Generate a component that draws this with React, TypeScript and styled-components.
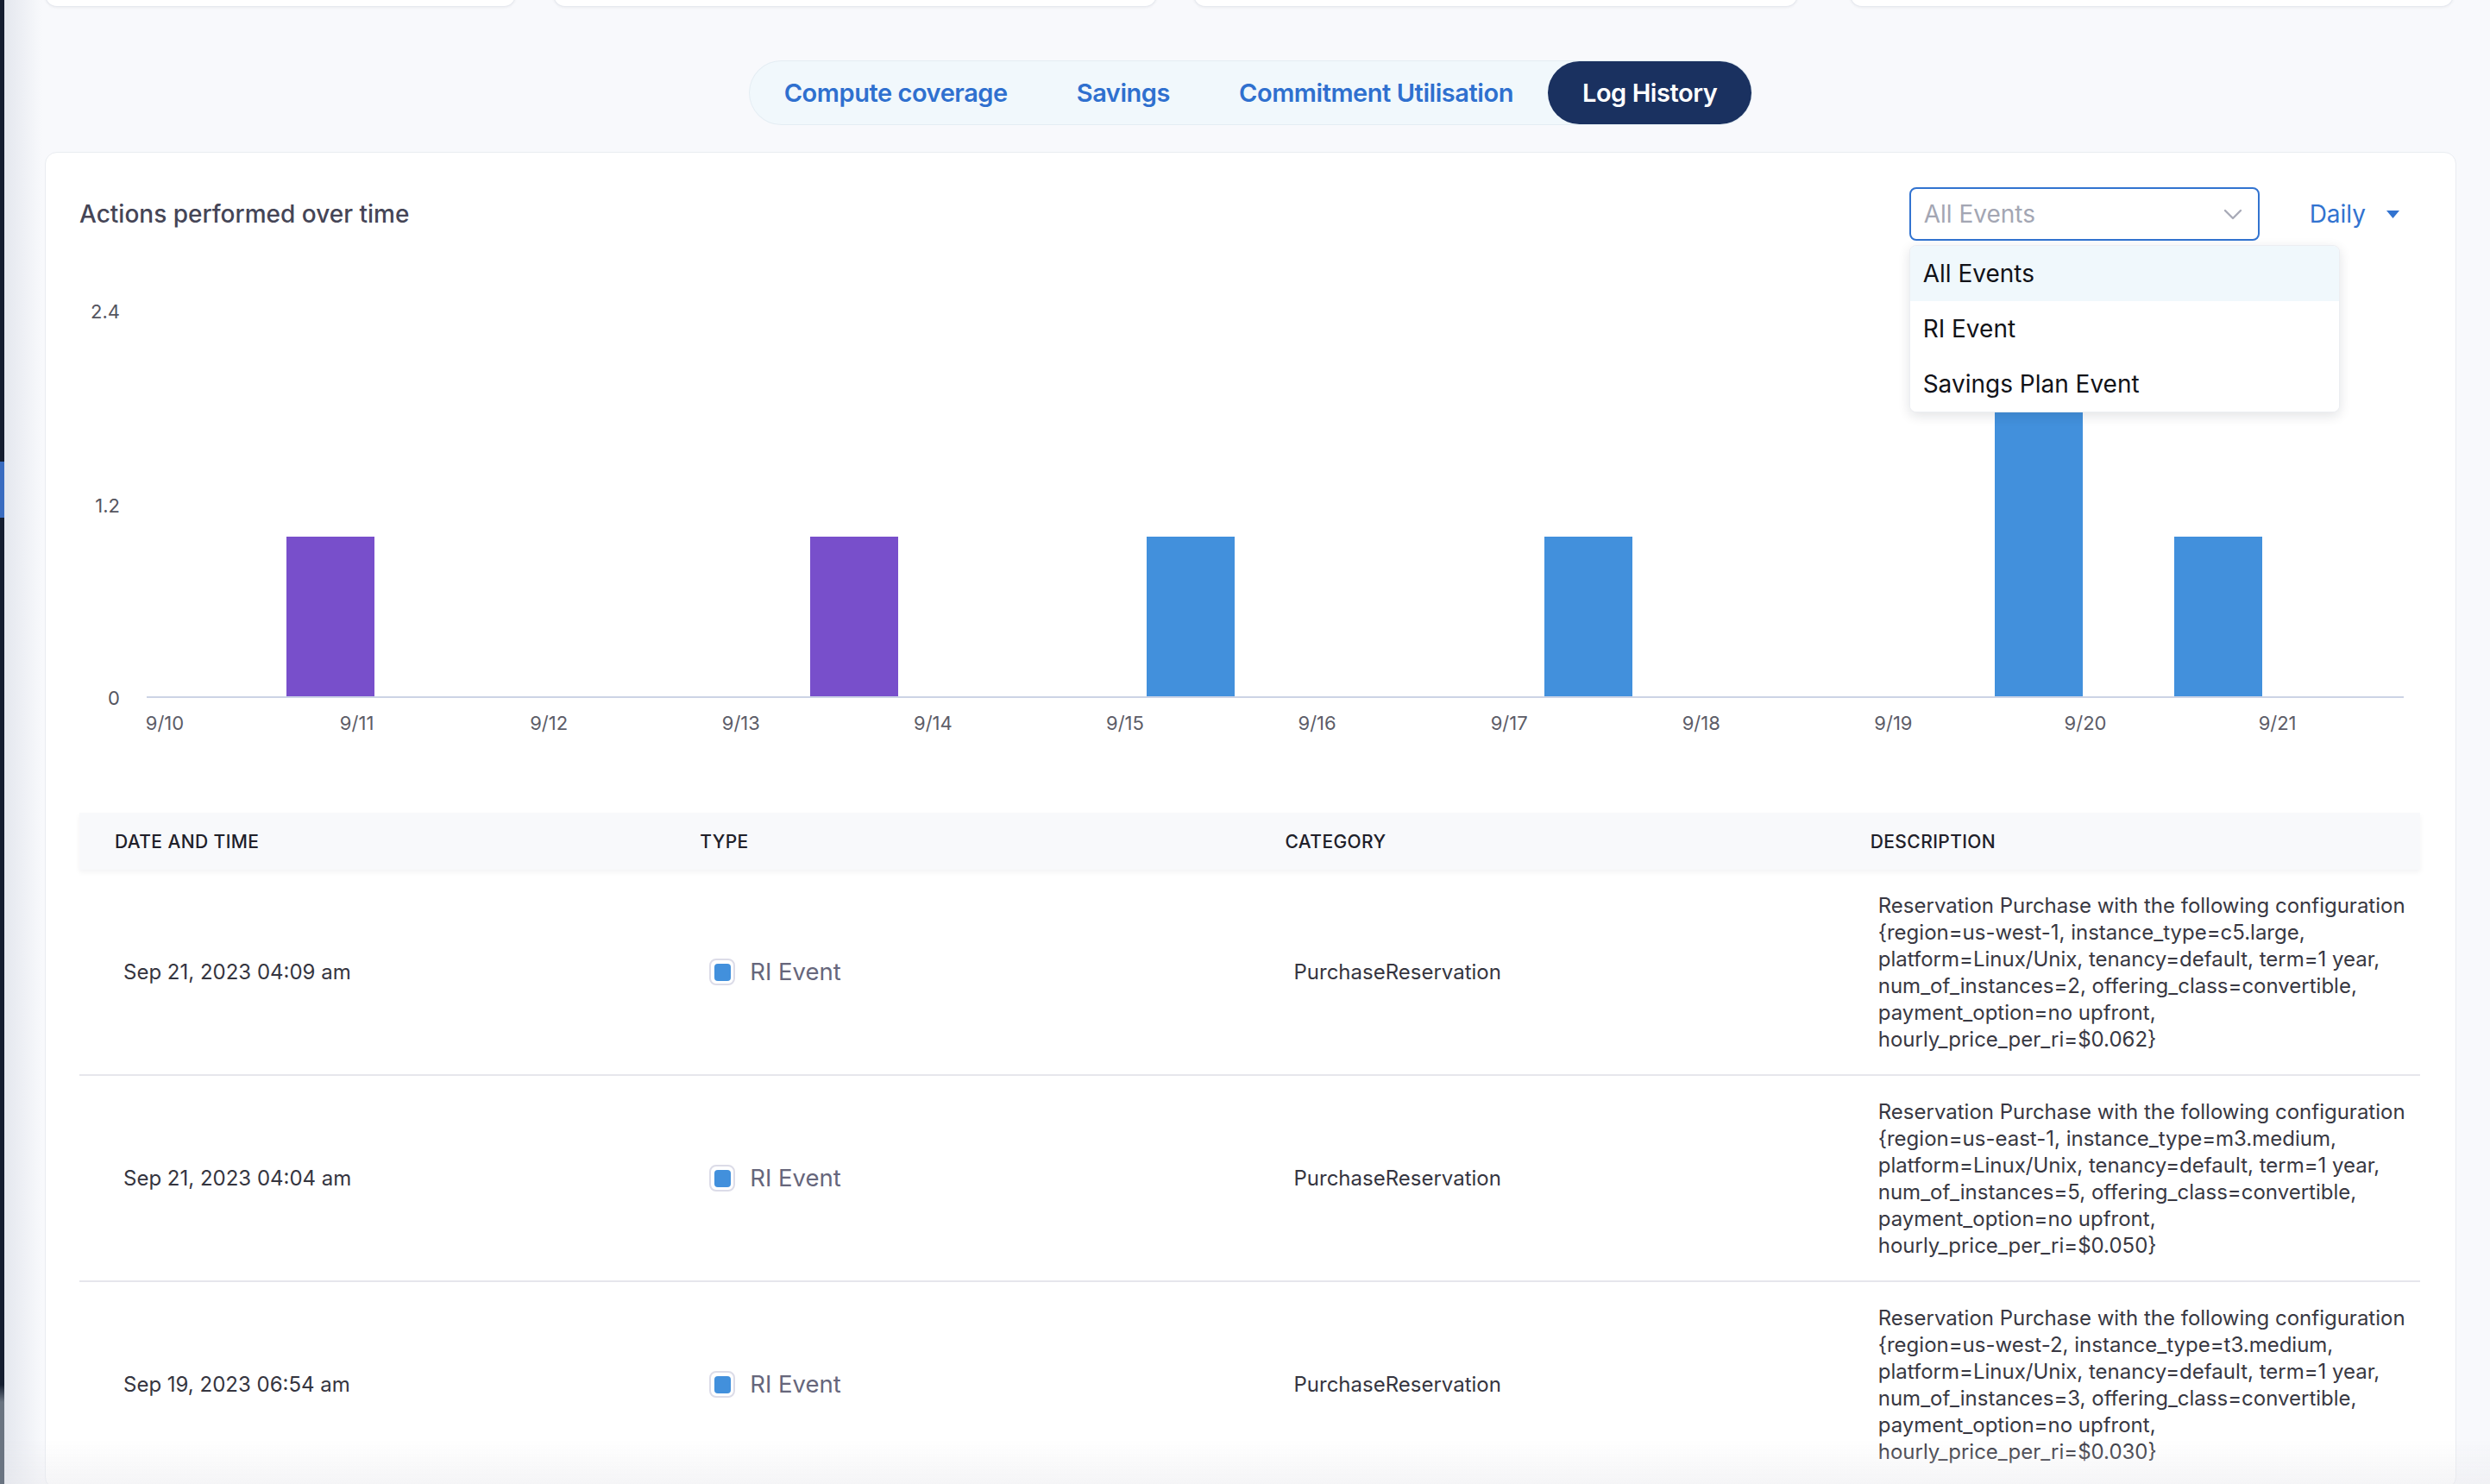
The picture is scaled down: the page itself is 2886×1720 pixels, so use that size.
import React from "react";
import styled, { createGlobalStyle } from "styled-components";

const GlobalStyle = createGlobalStyle`
  html, body { margin: 0; padding: 0; background: #f8f9fc; overflow: hidden; }
  body { font-family: Inter, "Noto Sans", "Liberation Sans", sans-serif; -webkit-font-smoothing: antialiased; }
  * { box-sizing: border-box; }
`;

const FONT = `Inter, "Noto Sans", "Liberation Sans", sans-serif`;

const Shell = styled.div`
  display: flex;
  width: 2886px;
  height: 1720px;
  overflow: hidden;
`;

const Rail = styled.div`
  width: 5px;
  flex: none;
  background: linear-gradient(
    to bottom,
    #151e30 0,
    #151e30 535px,
    #3a6cc0 535px,
    #3a6cc0 600px,
    #151e30 600px,
    #151e30 1605px,
    #6a7481 1625px
  );
`;

const Main = styled.main`
  flex: 1;
  min-width: 0;
  padding: 0 39px 0 47px;
  background: linear-gradient(to right, #e4e7ee 0, #f8f9fc 44px);
  display: flex;
  flex-direction: column;
`;

const TopCards = styled.div`
  display: flex;
  height: 60px;
  margin-top: -52px;
  flex: none;
`;

const TopCard = styled.div<{ $w: number; $ml: number }>`
  width: ${(p) => p.$w}px;
  margin-left: ${(p) => p.$ml}px;
  background: #fff;
  border: 1px solid #e6e9ef;
  border-top: none;
  border-radius: 0 0 14px 14px;
  box-shadow: 0 1px 3px rgba(16, 24, 40, 0.06);
`;

const TabBar = styled.nav`
  align-self: center;
  margin-top: 63px;
  display: flex;
  height: 73px;
  flex: none;
  background: #f1f8fc;
  box-shadow: 0 0 0 1px #e4edf3;
  border-radius: 37px;
`;

const Tab = styled.button<{ $active?: boolean }>`
  height: 100%;
  padding: 0 40px;
  border: none;
  border-radius: 37px;
  font-family: ${FONT};
  font-weight: 600;
  font-size: 29px;
  letter-spacing: -0.45px;
  color: ${(p) => (p.$active ? "#ffffff" : "#2f70cf")};
  background: ${(p) => (p.$active ? "#1a3160" : "transparent")};
  cursor: pointer;
`;

const Panel = styled.section`
  margin-top: 32px;
  flex: 1;
  background: #fff;
  border: 1px solid #e9ecf1;
  border-radius: 14px;
  padding: 40px 41px 0 39px;
`;

const PanelHeader = styled.div`
  display: flex;
  align-items: center;
  justify-content: space-between;
  height: 62px;
`;

const Title = styled.h2`
  margin: 0;
  font-family: ${FONT};
  font-weight: 500;
  font-size: 28px;
  color: #454556;
`;

const Controls = styled.div`
  display: flex;
  align-items: center;
  position: relative;
`;

const Select = styled.div`
  width: 406px;
  height: 62px;
  border: 2px solid #3273d0;
  border-radius: 8px;
  padding: 0 18px 0 15px;
  display: flex;
  align-items: center;
  justify-content: space-between;
  background: #fff;
`;

const Placeholder = styled.span`
  font-family: ${FONT};
  font-size: 28px;
  color: #a3a6b3;
`;

const PeriodButton = styled.button`
  margin-left: 34px;
  padding: 0 24px;
  height: 62px;
  border: none;
  background: transparent;
  display: flex;
  align-items: center;
  gap: 24px;
  font-family: ${FONT};
  font-size: 28px;
  color: #3273d0;
  cursor: pointer;
`;

const Menu = styled.ul`
  position: absolute;
  top: calc(100% + 5px);
  left: 0;
  width: 499px;
  margin: 0;
  padding: 0;
  list-style: none;
  background: #fff;
  border: 1px solid #eceef2;
  border-radius: 8px;
  box-shadow: 0 4px 14px rgba(20, 24, 40, 0.12);
  overflow: hidden;
  z-index: 5;
`;

const MenuItem = styled.li<{ $active?: boolean }>`
  height: 64px;
  padding: 0 15px;
  display: flex;
  align-items: center;
  font-family: ${FONT};
  font-size: 28px;
  color: #111218;
  background: ${(p) => (p.$active ? "#f0f8fc" : "#fff")};
`;

const ChartSvg = styled.svg`
  display: block;
  margin-top: 21px;
`;

const Table = styled.div`
  margin-top: 72px;
`;

const HeaderRow = styled.div`
  display: grid;
  grid-template-columns: repeat(4, 1fr);
  align-items: center;
  height: 66px;
  background: #f8f9fb;
  box-shadow: 0 3px 6px rgba(20, 20, 40, 0.05);
  position: relative;
  z-index: 1;
`;

const HeadCell = styled.div`
  padding-left: 41px;
  font-family: ${FONT};
  font-weight: 500;
  font-size: 21px;
  letter-spacing: 0.4px;
  color: #202029;
  text-transform: uppercase;
`;

const Row = styled.div`
  display: grid;
  grid-template-columns: repeat(4, 1fr);
  align-items: center;
  padding: 25.5px 0;
  border-bottom: 2px solid #e6e6ec;
`;

const Cell = styled.div`
  padding-left: 51px;
  font-family: ${FONT};
  font-size: 24px;
  line-height: 31px;
  color: #35353f;
`;

const DescCell = styled(Cell)`
  padding-left: 50px;
  padding-right: 0;
  color: #383842;
`;

const TypeCell = styled(Cell)`
  display: flex;
  align-items: center;
  gap: 17px;
  padding-left: 52px;
`;

const Check = styled.span`
  width: 30px;
  height: 31px;
  border: 2px solid #dcdce8;
  border-radius: 8px;
  background: #fff;
  display: flex;
  align-items: center;
  justify-content: center;
  flex: none;
`;

const CheckFill = styled.span`
  width: 19px;
  height: 20px;
  border-radius: 4px;
  background: #4290dc;
`;

const TypeLabel = styled.span`
  font-size: 27.5px;
  color: #66667b;
`;

const Fade = styled.div`
  position: fixed;
  left: 5px;
  right: 0;
  bottom: 0;
  height: 52px;
  pointer-events: none;
  background: linear-gradient(to bottom, rgba(255, 255, 255, 0), rgba(232, 232, 236, 0.45));
`;

const tabs = ["Compute coverage", "Savings", "Commitment Utilisation", "Log History"];

const dayW = 222.6;
const x0 = 99;
const xLabels = ["9/10", "9/11", "9/12", "9/13", "9/14", "9/15", "9/16", "9/17", "9/18", "9/19", "9/20", "9/21"];
const bars = [
  { c: 291, v: 1, color: "#784fcb" },
  { c: 898, v: 1, color: "#784fcb" },
  { c: 1288, v: 1, color: "#4290dc" },
  { c: 1749, v: 1, color: "#4290dc" },
  { c: 2271, v: 2, color: "#4290dc" },
  { c: 2479, v: 1, color: "#4290dc" },
];
const baseY = 508;
const unit = 186;
const yTicks = [
  { label: "2.4", y: 63 },
  { label: "1.2", y: 288 },
  { label: "0", y: 511 },
];

const rows = [
  { date: "Sep 21, 2023 04:09 am", region: "us-west-1", inst: "c5.large", n: 2, price: "$0.062" },
  { date: "Sep 21, 2023 04:04 am", region: "us-east-1", inst: "m3.medium", n: 5, price: "$0.050" },
  { date: "Sep 19, 2023 06:54 am", region: "us-west-2", inst: "t3.medium", n: 3, price: "$0.030" },
];

const describe = (r: (typeof rows)[number]) =>
  `Reservation Purchase with the following configuration {region=${r.region}, instance_type=${r.inst}, platform=Linux/Unix, tenancy=default, term=1 year, num_of_instances=${r.n}, offering_class=convertible, payment_option=no upfront, hourly_price_per_ri=${r.price}}`;

function Chart() {
  return (
    <ChartSvg width={2713} height={570} viewBox="0 0 2713 570">
      {yTicks.map((t) => (
        <text
          key={t.label}
          x={47}
          y={t.y}
          textAnchor="end"
          dominantBaseline="middle"
          fontFamily={FONT}
          fontSize={22}
          fill="#55555f"
        >
          {t.label}
        </text>
      ))}
      {bars.map((b, i) => (
        <rect key={i} x={b.c - 51} y={baseY - b.v * unit} width={102} height={b.v * unit} fill={b.color} />
      ))}
      <line x1={78} x2={2694} y1={baseY} y2={baseY} stroke="#ccd3e5" strokeWidth={2} />
      {xLabels.map((l, i) => (
        <text
          key={l}
          x={x0 + dayW * i}
          y={540}
          textAnchor="middle"
          dominantBaseline="middle"
          fontFamily={FONT}
          fontSize={22}
          fill="#5c5c67"
        >
          {l}
        </text>
      ))}
    </ChartSvg>
  );
}

export default function App() {
  return (
    <>
      <GlobalStyle />
      <Shell>
        <Rail />
        <Main>
          <TopCards>
            <TopCard $w={546} $ml={0} />
            <TopCard $w={700} $ml={43} />
            <TopCard $w={701} $ml={42} />
            <TopCard $w={700} $ml={60} />
          </TopCards>
          <TabBar>
            {tabs.map((t) => (
              <Tab key={t} $active={t === "Log History"}>
                {t}
              </Tab>
            ))}
          </TabBar>
          <Panel>
            <PanelHeader>
              <Title>Actions performed over time</Title>
              <Controls>
                <Select>
                  <Placeholder>All Events</Placeholder>
                  <svg width="22" height="13" viewBox="0 0 22 13" fill="none">
                    <path d="M2 2l9 9 9-9" stroke="#a9abb8" strokeWidth="2.4" strokeLinecap="round" strokeLinejoin="round" />
                  </svg>
                </Select>
                <PeriodButton>
                  Daily
                  <svg width="15" height="9" viewBox="0 0 15 9">
                    <path d="M0 0h15L7.5 9z" fill="#3273d0" />
                  </svg>
                </PeriodButton>
                <Menu>
                  <MenuItem $active>All Events</MenuItem>
                  <MenuItem>RI Event</MenuItem>
                  <MenuItem>Savings Plan Event</MenuItem>
                </Menu>
              </Controls>
            </PanelHeader>
            <Chart />
            <Table>
              <HeaderRow>
                <HeadCell>Date and time</HeadCell>
                <HeadCell>Type</HeadCell>
                <HeadCell>Category</HeadCell>
                <HeadCell>Description</HeadCell>
              </HeaderRow>
              {rows.map((r) => (
                <Row key={r.date}>
                  <Cell>{r.date}</Cell>
                  <TypeCell>
                    <Check>
                      <CheckFill />
                    </Check>
                    <TypeLabel>RI Event</TypeLabel>
                  </TypeCell>
                  <Cell>PurchaseReservation</Cell>
                  <DescCell>{describe(r)}</DescCell>
                </Row>
              ))}
            </Table>
          </Panel>
          <Fade />
        </Main>
      </Shell>
    </>
  );
}
